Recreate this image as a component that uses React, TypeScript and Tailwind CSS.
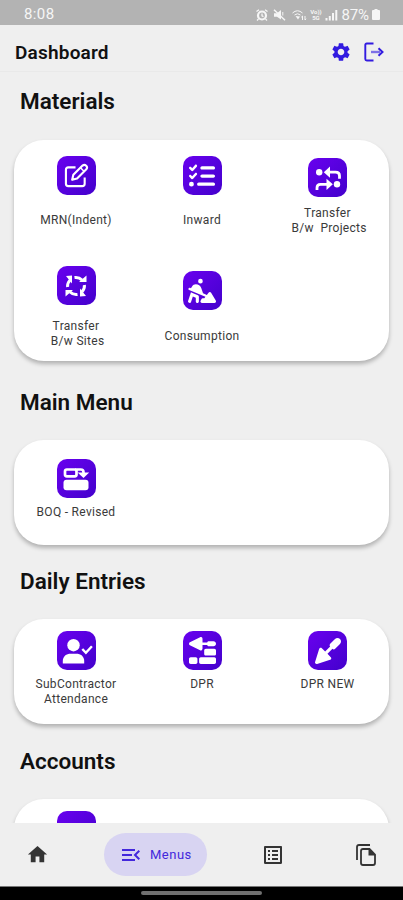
import React from "react";
import { FaListCheck, FaPersonDigging, FaTrowel, FaTrowelBricks } from "react-icons/fa6";
import { MdHome, MdListAlt, MdMenuOpen, MdSettings } from "react-icons/md";

type Tile = {
  icon: React.ReactNode;
  lines: string[];
  top: string;
  gap: string;
};

function EditIcon() {
  return (
    <svg viewBox="0 0 26 26" className="h-[25px] w-[25px]" fill="none" stroke="currentColor" strokeWidth="2.2">
      <path d="M12 4.5H4.5Q2 4.5 2 7v14.5Q2 24 4.5 24H19q2.5 0 2.5-2.5V15" />
      <path d="m8.5 17.5 1.2-5.2 9.6-9.6q1.9-1.6 3.8.1 1.7 1.9.1 3.8l-9.6 9.6Z" strokeLinejoin="round" />
      <path d="m17.2 5 3.8 3.8" strokeWidth="1.6" />
    </svg>
  );
}

function TransferPeopleIcon() {
  return (
    <svg viewBox="0 0 26 26" className="h-[26px] w-[26px]" fill="none" stroke="currentColor" strokeWidth="2.8">
      <circle cx="4.2" cy="7.2" r="3.2" fill="currentColor" stroke="none" />
      <path d="M13 7.2h7.5q4 0 4 3.5v3" />
      <path d="M8.8 7.2 15 1.6v11.2Z" fill="currentColor" stroke="none" />
      <circle cx="22" cy="19.3" r="3.2" fill="currentColor" stroke="none" />
      <path d="M2 25v-2.2q0-3.5 3.5-3.5H13" />
      <path d="m17.8 19.3-6.3-5.6v11.2Z" fill="currentColor" stroke="none" />
    </svg>
  );
}

function CycleIcon() {
  return (
    <svg viewBox="0 0 24 24" className="h-6 w-6" fill="none" stroke="currentColor" strokeWidth="3">
      <path d="M10.5 3.6q4.500-.6 7.500 2.400M20.400 11q.4 4-2.400 6.800M13.500 20.400q-4.500.6-7.500-2.400M3.600 13q-.4-4 2.400-6.800" />
      <path
        d="M15 8h7.500V1.500ZM16 14.500V22.500l6-.5ZM9 16H1.500v6.500ZM8 9.500V1.500L2 2Z"
        fill="currentColor"
        stroke="none"
      />
    </svg>
  );
}

function RevisedIcon() {
  return (
    <svg viewBox="0 0 28 26" className="h-[26px] w-7" fill="none" stroke="currentColor">
      <path
        d="M14.5 8.5V5.3q0-1.8-1.8-1.8H4.8Q3 3.5 3 5.3v3.2q0 1.8 1.8 1.8h7.9q1.8 0 1.8-1.8M13 3.5h5.8q2.7 0 2.7 2.7v1"
        strokeWidth="2.7"
      />
      <path d="M15.6 6.6h11.6L21.5 12Z" fill="currentColor" stroke="none" />
      <rect x="1.5" y="13.8" width="25" height="10.5" rx="3" fill="currentColor" stroke="none" />
    </svg>
  );
}

function AttendanceIcon() {
  return (
    <svg viewBox="0 0 32 26" className="ml-0.5 h-[26px] w-8" fill="currentColor">
      <circle cx="12.5" cy="7.2" r="6.2" />
      <path d="M1.8 25.5V23c0-4.8 3.5-7.3 8-7.3h5.4c4.5 0 8 2.5 8 7.3v2.5Z" />
      <path d="m21.3 11 3.6 3.8 6-6.5" fill="none" stroke="currentColor" strokeWidth="2.4" />
    </svg>
  );
}

function LogoutIcon() {
  return (
    <svg viewBox="0 0 20 20" className="h-5 w-5" fill="none" stroke="currentColor" strokeWidth="1.9">
      <path d="M9.5 1.5H2.8Q1.3 1.5 1.3 3v14q0 1.5 1.5 1.5h6.7" />
      <path d="M7 10h9" strokeWidth="2.4" className="opacity-60" />
      <path d="m14.5 6.2 4 3.8-4 3.8" strokeWidth="2" />
    </svg>
  );
}

function FilesIcon() {
  return (
    <svg viewBox="0 0 20 22" className="ml-auto h-[22px] w-5" fill="none" stroke="currentColor" strokeWidth="1.8">
      <path d="M1 16V3q0-2 2-2h11" />
      <path d="M7 5h6.5L19 10.5V19q0 2-2 2H7q-2 0-2-2V7q0-2 2-2Z" />
      <path d="M12.5 4.5v7H19.5Z" fill="currentColor" stroke="none" />
    </svg>
  );
}

const materials: Tile[] = [
  { icon: <EditIcon />, lines: ["MRN(Indent)"], top: "pt-4", gap: "mt-[18px]" },
  { icon: <FaListCheck className="h-[26px] w-[26px]" />, lines: ["Inward"], top: "pt-4", gap: "mt-[18px]" },
  { icon: <TransferPeopleIcon />, lines: ["Transfer", " B/w  Projects"], top: "pt-[18px]", gap: "mt-[9px]" },
  { icon: <CycleIcon />, lines: ["Transfer", " B/w Sites"], top: "pt-4", gap: "mt-[14px]" },
  { icon: <FaPersonDigging className="h-[25px] w-[28px]" />, lines: ["Consumption"], top: "pt-[21px]", gap: "mt-[19px]" },
];

const mainMenu: Tile[] = [
  { icon: <RevisedIcon />, lines: ["BOQ - Revised"], top: "pt-[19px]", gap: "mt-[7px]" },
];

const dailyEntries: Tile[] = [
  { icon: <AttendanceIcon />, lines: ["SubContractor", "Attendance"], top: "pt-3", gap: "mt-[7px]" },
  { icon: <FaTrowelBricks className="h-[27px] w-[27px]" />, lines: ["DPR"], top: "pt-3", gap: "mt-[7px]" },
  { icon: <FaTrowel className="h-[26px] w-[26px]" />, lines: ["DPR NEW"], top: "pt-3", gap: "mt-[7px]" },
];

const accounts: Tile[] = [{ icon: null, lines: [], top: "pt-3", gap: "mt-0" }];

function MenuTile({ icon, lines, top, gap }: Tile) {
  return (
    <button className={`flex flex-col items-center ${top}`}>
      <span className="flex h-[39px] w-[39px] shrink-0 items-center justify-center rounded-[10px] bg-linear-to-br from-[#6900ef] to-[#4300cc] text-white">
        {icon}
      </span>
      <span className={`text-center text-xs leading-[14.5px] tracking-[0.3px] whitespace-pre text-[#3a3a3a] ${gap}`}>
        {lines.map((line) => (
          <span key={line} className="block">
            {line}
          </span>
        ))}
      </span>
    </button>
  );
}

type SectionProps = {
  title: string;
  tiles: Tile[];
  height: string;
  offset: string;
  titleHeight?: string;
};

function Section({ title, tiles, height, offset, titleHeight = "h-7" }: SectionProps) {
  return (
    <section className={`shrink-0 ${offset}`}>
      <h2 className={`ml-5 text-[22.5px] leading-[29px] font-semibold text-[#111] ${titleHeight}`}>{title}</h2>
      <div
        className={`mx-3.5 mt-6 grid auto-rows-[110px] grid-cols-[124px_128px_123px] rounded-[30px] bg-white shadow-[0_3px_4px_rgba(0,0,0,0.26)] ${height}`}
      >
        {tiles.map((tile, i) => (
          <MenuTile key={i} {...tile} />
        ))}
      </div>
    </section>
  );
}

function StatusBar() {
  return (
    <div className="flex h-[25px] shrink-0 items-center justify-between bg-[#b3b3b3] pt-1 pr-[23px] pl-6 text-[#f6f6f6]">
      <span className="text-[15px] tracking-[0.4px]">8:08</span>
      <div className="flex items-center">
        <svg viewBox="0 0 12 12" className="mr-[5px] h-3 w-3" fill="none" stroke="currentColor">
          <circle cx="6" cy="6.5" r="4" strokeWidth="2.2" />
          <path d="M.5 2.5 3 .7M9 .7l2.5 1.8M2.5 10 1 11.5M9.5 10l1.5 1.5M6 4.5v2.3l1.5.8" strokeWidth="1.3" />
        </svg>
        <svg viewBox="0 0 13 12" className="mr-1.5 h-3 w-[13px]" fill="currentColor">
          <path d="M1 4.2h3L8 1v9.5L4 7.8H1Z" />
          <path d="m1 .8 11 10.4" stroke="currentColor" strokeWidth="1.5" />
          <path d="M9.8 3v3.5" stroke="currentColor" />
        </svg>
        <svg viewBox="0 0 15 12" className="mr-0.5 h-3 w-[15px]" fill="none" stroke="currentColor">
          <path d="M.5 4q5-4.5 10 0M2.5 6q3-2.5 6 0" />
          <path d="m3.5 7 2.500 3.500L8 7.500Z" fill="currentColor" stroke="none" />
          <path d="M10.5 7v4M9.3 8.2 10.5 7M13 7v4M13 11l1.2-1.2" />
        </svg>
        <span className="mr-[3px] flex w-[13px] flex-col items-center text-[6px] leading-[6px] font-bold">
          <span>Vo))</span>
          <span>5G</span>
        </span>
        <svg viewBox="0 0 13 12" className="mr-[3px] h-3 w-[13px]" fill="currentColor">
          <path d="M.5 9h2v2.5h-2ZM3.8 7h2v4.5h-2ZM7 4h2v7.5H7Z" />
          <path d="M10.3 1h2v10.5h-2Z" />
        </svg>
        <span className="text-[15px] leading-5 tracking-[-0.1px]">87%</span>
        <svg viewBox="0 0 8 11" className="ml-[3px] h-[11px] w-2" fill="currentColor">
          <path d="M2.5 0h3v1H7q1 0 1 1v8q0 1-1 1H1q-1 0-1-1V2q0-1 1-1h1.5Z" />
        </svg>
      </div>
    </div>
  );
}

export default function App() {
  return (
    <div className="flex h-[900px] w-[403px] flex-col overflow-hidden bg-[#efefef] font-[Roboto,sans-serif]">
      <StatusBar />
      <header className="flex h-[47px] shrink-0 items-center border-b border-[#e9e9e9] pt-2 pr-[19px] pl-[15px]">
        <h1 className="flex-1 pt-0.5 text-[19px] font-semibold tracking-[0.2px] text-[#111]">Dashboard</h1>
        <MdSettings className="mr-3 h-[22px] w-[22px] text-[#321be0]" />
        <span className="text-[#321be0]">
          <LogoutIcon />
        </span>
      </header>

      <main className="flex min-h-0 flex-1 flex-col overflow-hidden">
        <Section title="Materials" tiles={materials} height="h-[221px]" offset="mt-[15px]" titleHeight="h-[29px]" />
        <Section title="Main Menu" tiles={mainMenu} height="h-[105px]" offset="mt-[27px]" />
        <Section title="Daily Entries" tiles={dailyEntries} height="h-[105px]" offset="mt-[22px]" />
        <Section title="Accounts" tiles={accounts} height="h-[105px]" offset="mt-[23px]" />
      </main>

      <nav className="flex h-[63px] shrink-0 items-center pr-[27px] pl-[26px] text-[#343434]">
        <MdHome className="h-[23px] w-[23px]" />
        <button className="ml-[55px] flex h-[43px] w-[103px] items-center rounded-full bg-[#d8d4f2] pl-[15px] text-[#4328dc]">
          <MdMenuOpen className="h-6 w-6" />
          <span className="ml-[7px] text-[13px] tracking-[0.5px]">Menus</span>
        </button>
        <MdListAlt className="ml-[54px] h-6 w-6" />
        <FilesIcon />
      </nav>

      <div className="flex h-3.5 shrink-0 justify-center border-t border-[#777] bg-black pt-1">
        <div className="h-1 w-[121px] rounded-full bg-[#707070]" />
      </div>
    </div>
  );
}
